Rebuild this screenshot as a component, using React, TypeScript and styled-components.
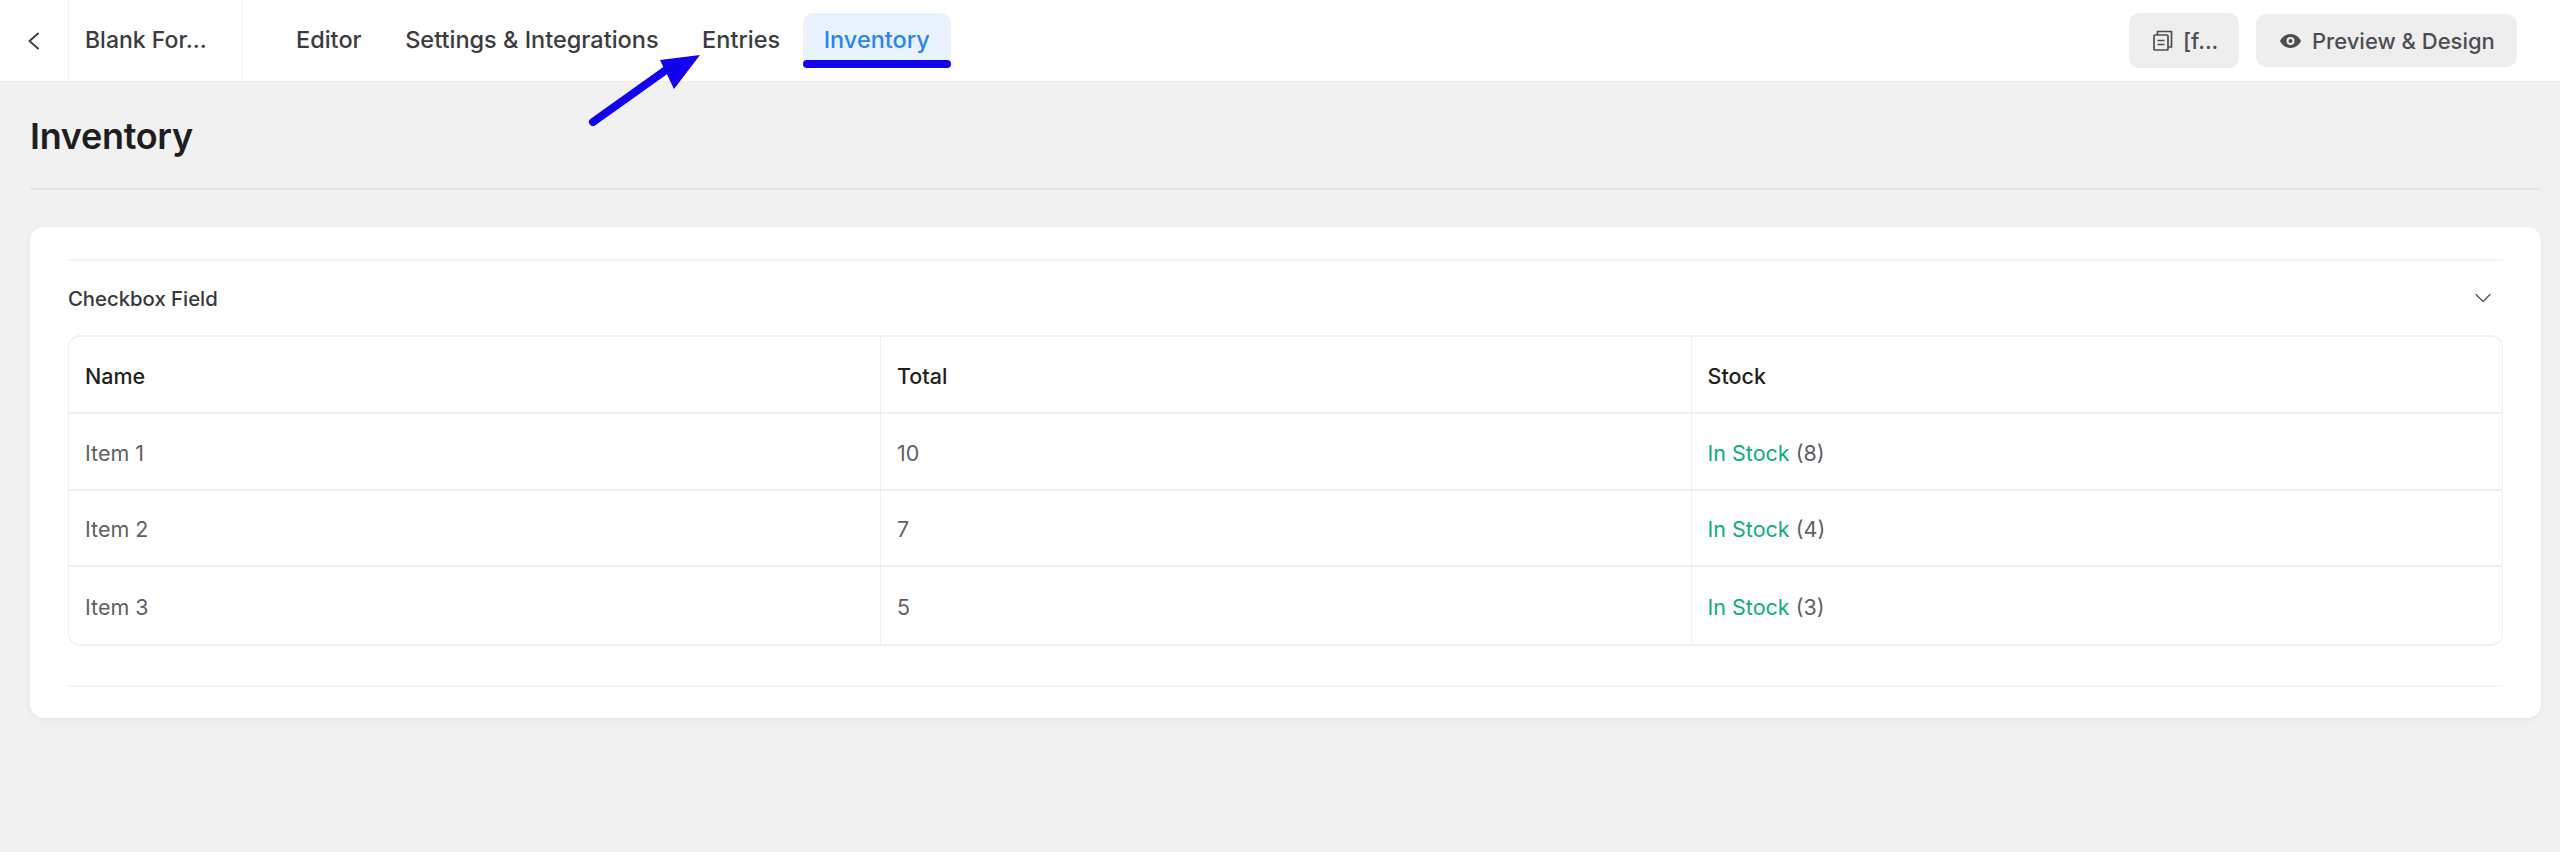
import React from 'react'
import styled, { createGlobalStyle } from 'styled-components'

const GlobalStyle = createGlobalStyle`
  html, body {
    margin: 0;
    padding: 0;
    background: #f1f1f1;
    font-family: Inter, "Noto Sans", sans-serif;
    -webkit-font-smoothing: antialiased;
  }
  * { box-sizing: border-box; }
`

const Page = styled.div`
  position: relative;
  height: 852px;
  overflow: hidden;
  background: #f1f1f1;
`

const TopBar = styled.header`
  display: flex;
  align-items: center;
  height: 82px;
  padding-right: 43px;
  background: #fff;
  border-bottom: 1px solid #ececec;
`

const BackCell = styled.div`
  display: flex;
  align-items: center;
  justify-content: center;
  width: 69px;
  height: 100%;
  padding-right: 2px;
  color: #3f3f46;
  border-right: 1px solid #f2f2f2;
`

const FormTitle = styled.div`
  display: flex;
  align-items: center;
  width: 174px;
  height: 100%;
  padding: 0 0 2px 16px;
  font-size: 23px;
  font-weight: 500;
  color: #3b3b40;
  border-right: 1px solid #f2f2f2;
`

const Nav = styled.nav`
  display: flex;
  align-items: center;
  gap: 1.5px;
  margin-left: 32px;
`

const Tab = styled.div<{ $active?: boolean }>`
  position: relative;
  display: flex;
  align-items: center;
  height: 55px;
  padding: 0 21px 3px;
  font-size: 23.5px;
  font-weight: 500;
  white-space: nowrap;
  border-radius: 10px;
  color: ${(props) => (props.$active ? '#2a86ec' : '#3b3b40')};
  background: ${(props) => (props.$active ? '#e8f2fd' : 'transparent')};

  ${(props) =>
    props.$active &&
    `
    &::after {
      content: '';
      position: absolute;
      left: 0;
      right: 0;
      bottom: 0;
      height: 8px;
      border-radius: 4px;
      background: #1300ee;
    }
  `}
`

const Actions = styled.div`
  display: flex;
  align-items: center;
  gap: 17px;
  margin-left: auto;
`

const ActionButton = styled.button<{ $wide?: boolean }>`
  display: flex;
  align-items: center;
  gap: ${(props) => (props.$wide ? '11px' : '10px')};
  height: ${(props) => (props.$wide ? '53px' : '55px')};
  width: ${(props) => (props.$wide ? '261px' : '110px')};
  padding: 0 0 0 24px;
  border: 0;
  border-radius: 10px;
  background: #eeeeef;
  color: #4d4d52;
  font-family: inherit;
  font-size: 22px;
  font-weight: 500;
  white-space: nowrap;
`

const Content = styled.main`
  padding: 0 19px 0 30px;
`

const PageHeading = styled.div`
  display: flex;
  align-items: center;
  height: 108px;
  padding-top: 2px;
  border-bottom: 2px solid #e6e6e6;
`

const PageTitle = styled.h1`
  margin: 0;
  font-size: 36px;
  font-weight: 600;
  letter-spacing: -0.3px;
  color: #1e1e20;
`

const Card = styled.section`
  margin-top: 37px;
  padding: 32px 38px 31px;
  background: #fff;
  border-radius: 14px;
  box-shadow: 0 2px 6px rgba(0, 0, 0, 0.05);
`

const Accordion = styled.div`
  border-top: 2px solid #f5f5f5;
  border-bottom: 2px solid #f5f5f5;
  padding-bottom: 39px;
`

const AccordionHead = styled.div`
  display: flex;
  align-items: center;
  justify-content: space-between;
  height: 74px;
  padding-right: 12px;
  font-size: 20.3px;
  font-weight: 500;
  color: #38383c;
`

const StockTable = styled.table`
  width: 100%;
  table-layout: fixed;
  border-collapse: separate;
  border-spacing: 0;
  border-top: 2px solid #f1f1f1;
  border-left: 1px solid #f0f0f0;
  border-right: 1px solid #f0f0f0;
  border-bottom: 2px solid #f0f0f0;
  border-radius: 12px;
`

const HeadCell = styled.th`
  height: 77px;
  padding: 2px 16px 0;
  text-align: left;
  font-size: 21.5px;
  font-weight: 500;
  color: #1f1f22;
  border-bottom: 2px solid #efefef;
  border-right: 1px solid #f0f0f0;

  &:first-child { width: 812px; }
  &:last-child { border-right: 0; }
`

const BodyCell = styled.td`
  height: 76.5px;
  padding: 3px 16px 0;
  font-size: 21.5px;
  font-weight: 400;
  color: #5f5f64;
  border-bottom: 2px solid #efefef;
  border-right: 1px solid #f0f0f0;

  &:last-child { border-right: 0; }
  tr:last-child & { border-bottom: 0; }
`

const InStock = styled.span`
  color: #10ac7d;
`

const ArrowMark = styled.svg`
  position: absolute;
  left: 580px;
  top: 45px;
`

const rows = [
  { name: 'Item 1', total: 10, stock: 8 },
  { name: 'Item 2', total: 7, stock: 4 },
  { name: 'Item 3', total: 5, stock: 3 },
]

export default function App() {
  return (
    <Page>
      <GlobalStyle />
      <TopBar>
        <BackCell>
          <svg width="13" height="18" viewBox="0 0 13 18" fill="none">
            <path d="M11 1.5 2.5 9l8.5 7.5" stroke="currentColor" strokeWidth="2" strokeLinecap="round" strokeLinejoin="round" />
          </svg>
        </BackCell>
        <FormTitle>Blank For...</FormTitle>
        <Nav>
          <Tab>Editor</Tab>
          <Tab>Settings &amp; Integrations</Tab>
          <Tab>Entries</Tab>
          <Tab $active>Inventory</Tab>
        </Nav>
        <Actions>
          <ActionButton>
            <svg width="20" height="21" viewBox="0 0 20 21" fill="none" stroke="currentColor" strokeWidth="1.7">
              <rect x="1" y="5" width="14" height="15" rx="1" />
              <path d="M4.5 5V1.5h14V17H15" />
              <path d="M4.5 10.5h7M4.5 14.5h7" />
            </svg>
            [f...
          </ActionButton>
          <ActionButton $wide>
            <svg width="21" height="14" viewBox="0 0 21 14">
              <path
                fill="currentColor"
                fillRule="evenodd"
                d="M10.5 0C15.4 0 19.2 3 21 7c-1.8 4-5.6 7-10.5 7S1.8 11 0 7c1.8-4 5.6-7 10.5-7Zm0 3a4 4 0 1 0 0 8 4 4 0 0 0 0-8Zm0 2a2 2 0 1 1 0 4 2 2 0 0 1 0-4Z"
              />
            </svg>
            Preview &amp; Design
          </ActionButton>
        </Actions>
      </TopBar>

      <Content>
        <PageHeading>
          <PageTitle>Inventory</PageTitle>
        </PageHeading>
        <Card>
          <Accordion>
            <AccordionHead>
              Checkbox Field
              <svg width="16" height="10" viewBox="0 0 16 10" fill="none">
                <path d="M1 1.5 8 8.5l7-7" stroke="#55555a" strokeWidth="1.3" strokeLinecap="round" strokeLinejoin="round" />
              </svg>
            </AccordionHead>
            <StockTable>
              <thead>
                <tr>
                  <HeadCell>Name</HeadCell>
                  <HeadCell>Total</HeadCell>
                  <HeadCell>Stock</HeadCell>
                </tr>
              </thead>
              <tbody>
                {rows.map((row) => (
                  <tr key={row.name}>
                    <BodyCell>{row.name}</BodyCell>
                    <BodyCell>{row.total}</BodyCell>
                    <BodyCell>
                      <InStock>In Stock</InStock> ({row.stock})
                    </BodyCell>
                  </tr>
                ))}
              </tbody>
            </StockTable>
          </Accordion>
        </Card>
      </Content>

      {/* annotation arrow drawn over the screenshot */}
      <ArrowMark width="130" height="90" viewBox="0 0 130 90">
        <path d="M13 77 86 25" stroke="#1300ee" strokeWidth="8" strokeLinecap="round" fill="none" />
        <path d="M120 10 80 15 94 44Z" fill="#1300ee" />
      </ArrowMark>
    </Page>
  )
}
